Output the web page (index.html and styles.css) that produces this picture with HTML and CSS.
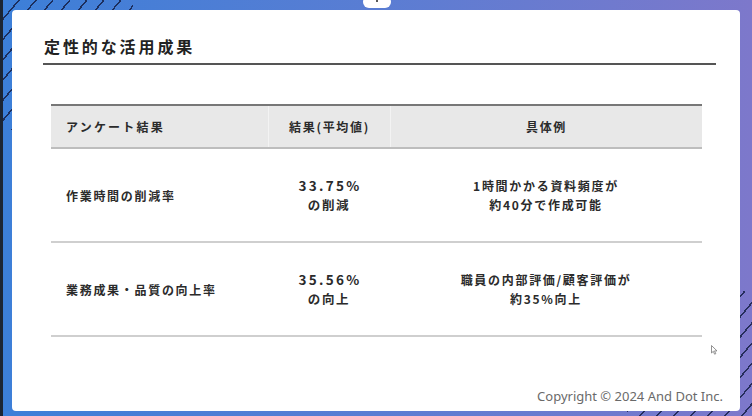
FILE: index.html
```html
<!DOCTYPE html>
<html lang="ja">
<head>
<meta charset="utf-8">
<title>定性的な活用成果</title>
<link rel="stylesheet" href="styles.css">
</head>
<body>
<div class="screen">
  <div class="stripes stripes-tl"></div>
  <div class="stripes stripes-br"></div>
  <div class="tab"><span class="tab-dot"></span></div>
  <div class="slide">
    <h1 class="title">定性的な活用成果</h1>
    <div class="table">
      <div class="row head">
        <div class="cell c1">アンケート結果</div>
        <div class="cell c2">結果(平均値)</div>
        <div class="cell c3">具体例</div>
      </div>
      <div class="row body">
        <div class="cell c1">作業時間の削減率</div>
        <div class="cell c2"><span class="num">33.75%</span><span>の削減</span></div>
        <div class="cell c3"><span>1時間かかる資料頻度が</span><span>約40分で作成可能</span></div>
      </div>
      <div class="row body">
        <div class="cell c1">業務成果・品質の向上率</div>
        <div class="cell c2"><span class="num">35.56%</span><span>の向上</span></div>
        <div class="cell c3"><span>職員の内部評価/顧客評価が</span><span>約35%向上</span></div>
      </div>
    </div>
    <div class="footer">
      <svg class="cursor" width="7" height="10" viewBox="0 0 7 10"><path d="M0.5 0.5 L0.5 8 L2.3 6.3 L3.6 9.2 L4.8 8.7 L3.5 5.9 L6 5.9 Z" fill="#fff" stroke="#777" stroke-width="0.8"/></svg>
      <p class="copyright">Copyright © 2024 And Dot Inc.</p>
    </div>
  </div>
</div>
</body>
</html>
```
FILE: styles.css
```css
html, body {
  margin: 0;
  padding: 0;
}
body {
  width: 752px;
  height: 416px;
  overflow: hidden;
  font-family: "Noto Sans CJK JP", "Noto Sans", sans-serif;
}
.screen {
  position: relative;
  box-sizing: border-box;
  width: 752px;
  height: 416px;
  padding: 10px 12px 5px 9px;
  background: linear-gradient(90deg, #3c7fd8 0%, #5a7dd3 50%, #7d78cb 100%);
  border-left: 3px solid #1c2533;
}
.stripes {
  position: absolute;
  background: repeating-linear-gradient(130deg, transparent 0 11.5px, rgba(22, 32, 72, 0.85) 11.5px 13px);
}
.stripes-tl {
  left: 0;
  top: 0;
  width: 130px;
  height: 130px;
  -webkit-mask-image: linear-gradient(135deg, #000 0 60%, transparent 75%);
  mask-image: linear-gradient(135deg, #000 0 60%, transparent 75%);
}
.stripes-br {
  right: 0;
  bottom: 0;
  width: 125px;
  height: 125px;
  -webkit-mask-image: linear-gradient(315deg, #000 0 60%, transparent 75%);
  mask-image: linear-gradient(315deg, #000 0 60%, transparent 75%);
}
.tab {
  position: absolute;
  left: 360px;
  top: -4px;
  width: 28px;
  height: 12px;
  background: #fff;
  border-radius: 6px;
  z-index: 2;
  display: flex;
  justify-content: center;
  padding-top: 4px;
  box-sizing: border-box;
}
.tab-dot {
  width: 2px;
  height: 2px;
  border-radius: 50%;
  background: #222;
}
.slide {
  position: relative;
  z-index: 1;
  box-sizing: border-box;
  height: 401px;
  background: #fff;
  border-radius: 4px;
  padding: 26px 24px 0 31px;
  display: flex;
  flex-direction: column;
  color: #2b2b2b;
}
.title {
  margin: 0;
  padding: 0 0 7px 1px;
  font-size: 16px;
  line-height: 20px;
  font-weight: 700;
  letter-spacing: 2.9px;
  border-bottom: 2px solid #555;
  color: #222;
}
.table {
  margin: 39px 14px 0 8px;
  border-top: 2px solid #777;
  display: flex;
  flex-direction: column;
}
.row {
  display: grid;
  grid-template-columns: 217px 122px 1fr;
}
.head {
  background: #e8e8e8;
  height: 41px;
  border-bottom: 2px solid #bdbdbd;
}
.head .cell + .cell {
  border-left: 1px solid #f3f3f3;
}
.body {
  height: 92px;
  border-bottom: 2px solid #cfcfcf;
}
.cell {
  display: flex;
  flex-direction: column;
  justify-content: center;
  font-size: 12px;
  line-height: 19px;
  font-weight: 700;
  letter-spacing: 1.7px;
}
.c1 {
  padding-left: 15px;
}
.c2, .c3 {
  align-items: center;
  text-align: center;
}
.body .c2 {
  font-size: 12.5px;
}
.num {
  font-size: 13.5px;
  letter-spacing: 2.3px;
  padding-left: 2px;
}
.head .c1 {
  letter-spacing: 2.2px;
}
.footer {
  flex: 1;
  display: flex;
  flex-direction: column;
  align-items: flex-end;
  justify-content: space-between;
  padding: 8px 0 6px 0;
  margin-right: -7px;
}
.cursor {
  margin-right: 5px;
}
.copyright {
  margin: 0;
  font-family: "Noto Sans", "Open Sans", sans-serif;
  font-size: 13px;
  line-height: 18px;
  color: #6a6a6a;
  letter-spacing: 0;
}
```
